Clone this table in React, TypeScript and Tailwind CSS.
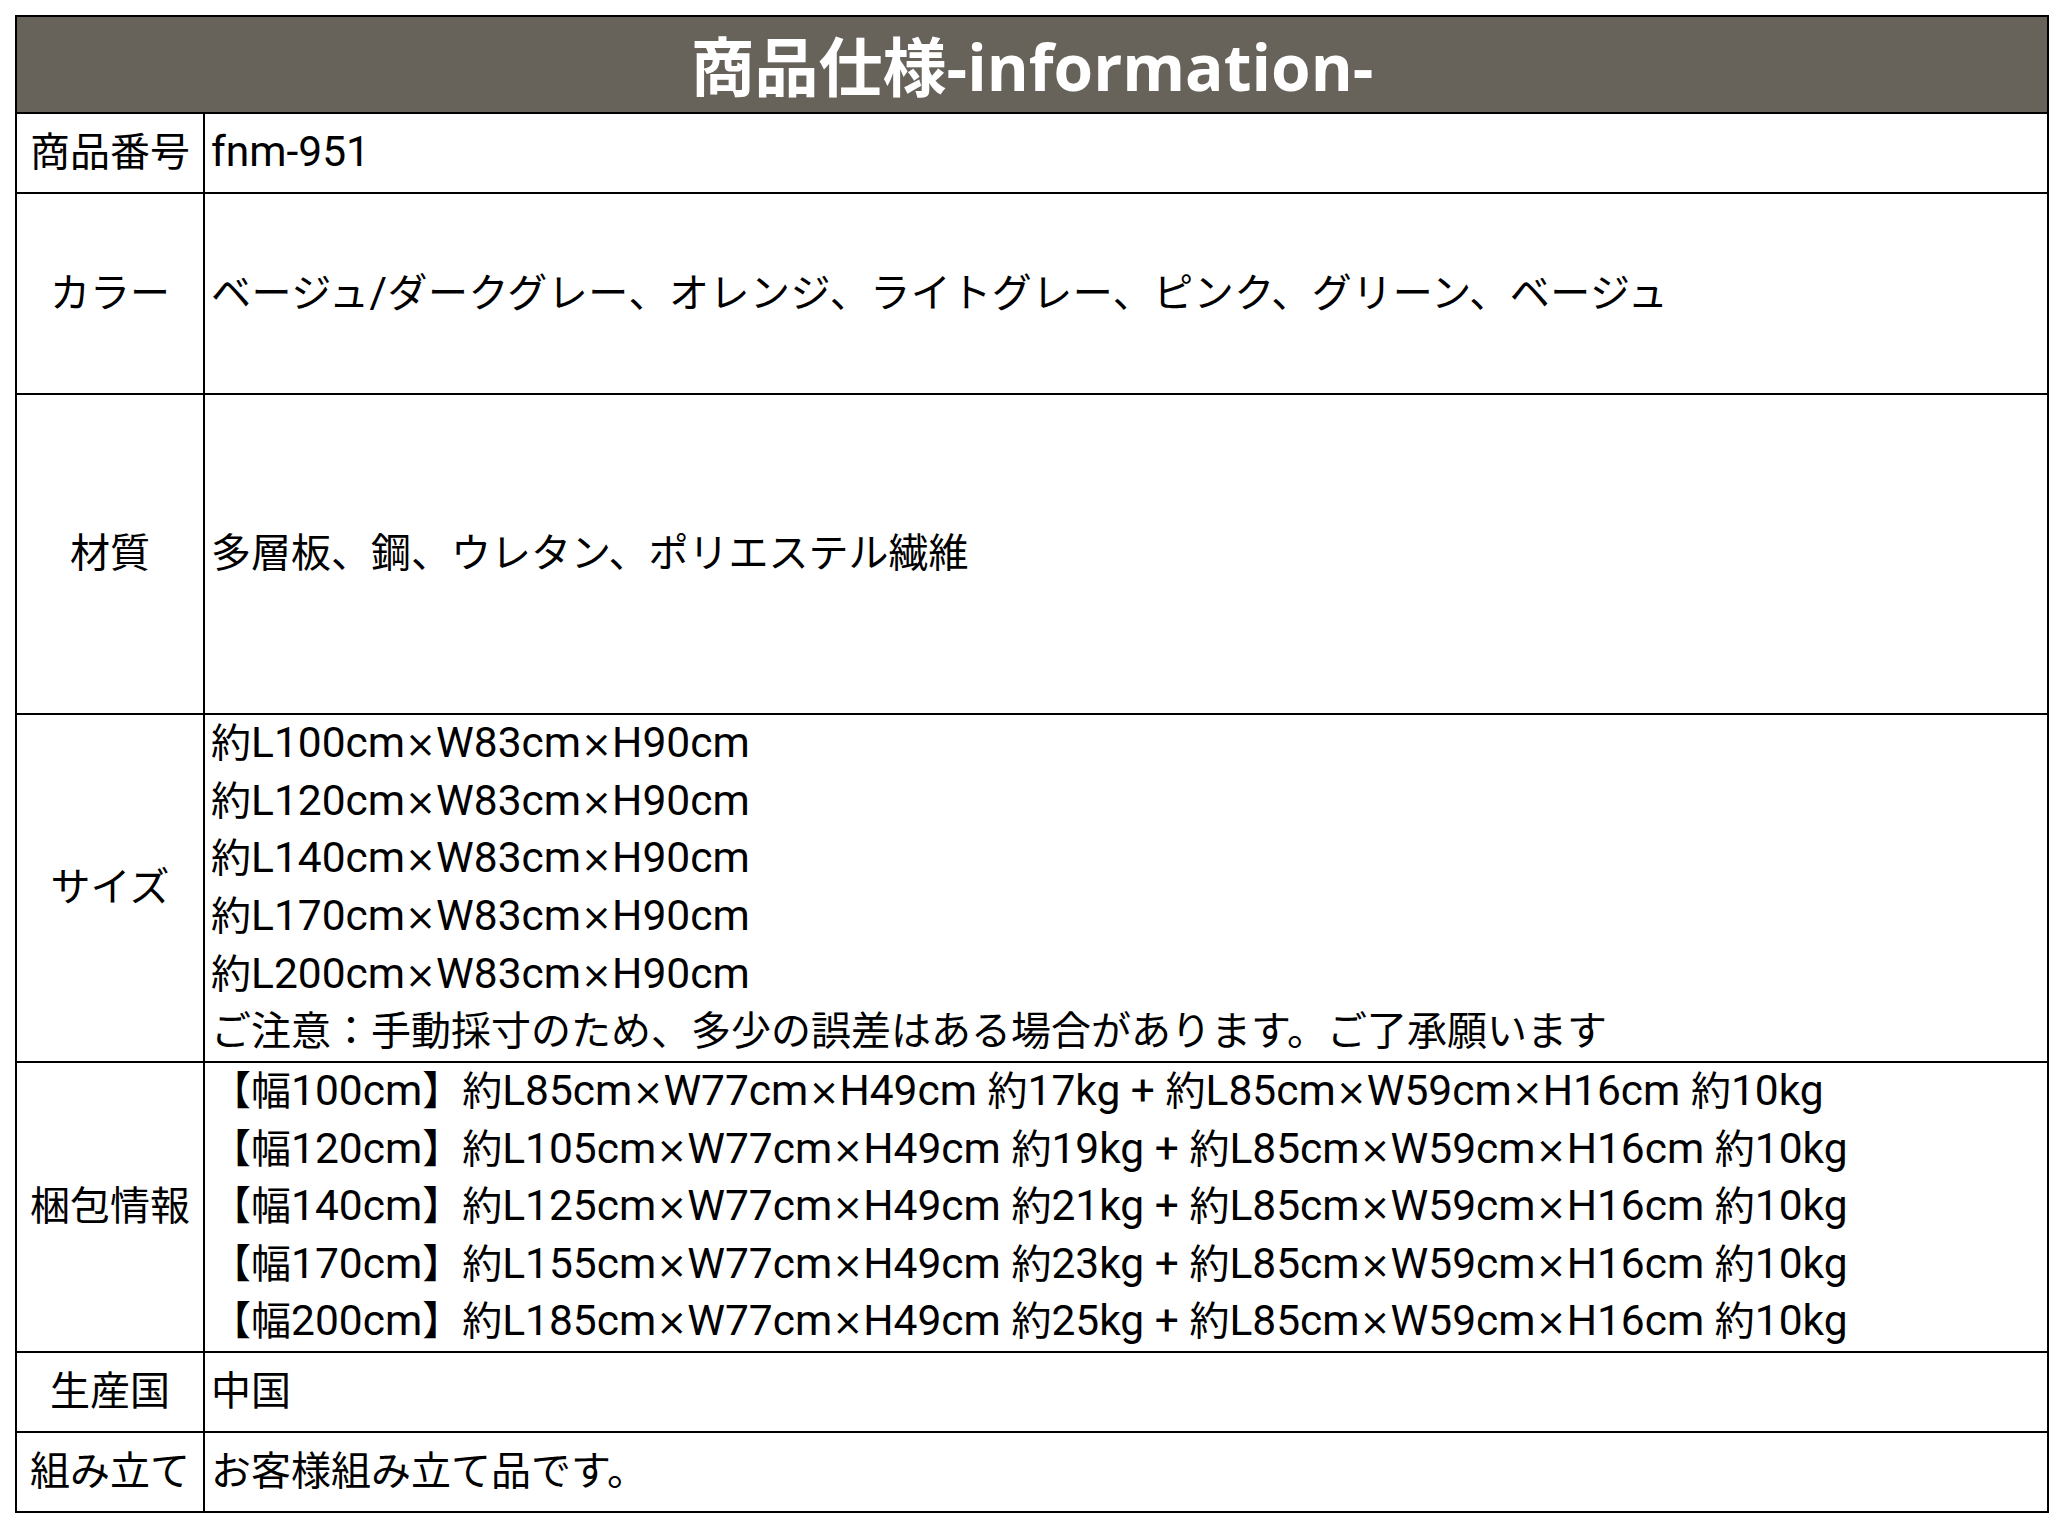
import React from "react";

const CJK = /([\u3000-\u30ff\u3400-\u9fff\uff00-\uffef]+)/;
const CJK_TEST = /[\u3000-\u30ff\u3400-\u9fff\uff00-\uffef]/;

function Latin({ text }: { text: string }) {
  const parts = text.split(/(×)/).filter((p) => p !== "");
  return (
    <>
      {parts.map((p, i) =>
        p === "×" ? (
          <span key={i} className="font-['DejaVu_Sans',sans-serif] text-[37px] leading-none">
            ×
          </span>
        ) : (
          <span key={i} className="text-[42.5px] leading-none">
            {p}
          </span>
        )
      )}
    </>
  );
}

function Mixed({ text }: { text: string }) {
  const parts = text.split(CJK).filter((p) => p !== "");
  return (
    <>
      {parts.map((p, i) =>
        CJK_TEST.test(p) ? <span key={i}>{p}</span> : <Latin key={i} text={p} />
      )}
    </>
  );
}

type Row = { label: string; h: string; lines: string[]; track?: boolean };

const rows: Row[] = [
  { label: "商品番号", h: "h-[80px]", lines: ["fnm-951"] },
  {
    label: "カラー",
    h: "h-[201px]",
    lines: ["ベージュ/ダークグレー、オレンジ、ライトグレー、ピンク、グリーン、ベージュ"],
    track: true,
  },
  { label: "材質", h: "h-[320px]", lines: ["多層板、鋼、ウレタン、ポリエステル繊維"] },
  {
    label: "サイズ",
    h: "h-[348px]",
    lines: [
      "約L100cm×W83cm×H90cm",
      "約L120cm×W83cm×H90cm",
      "約L140cm×W83cm×H90cm",
      "約L170cm×W83cm×H90cm",
      "約L200cm×W83cm×H90cm",
      "ご注意：手動採寸のため、多少の誤差はある場合があります。ご了承願います",
    ],
  },
  {
    label: "梱包情報",
    h: "h-[290px]",
    lines: [
      "【幅100cm】約L85cm×W77cm×H49cm 約17kg + 約L85cm×W59cm×H16cm 約10kg",
      "【幅120cm】約L105cm×W77cm×H49cm 約19kg + 約L85cm×W59cm×H16cm 約10kg",
      "【幅140cm】約L125cm×W77cm×H49cm 約21kg + 約L85cm×W59cm×H16cm 約10kg",
      "【幅170cm】約L155cm×W77cm×H49cm 約23kg + 約L85cm×W59cm×H16cm 約10kg",
      "【幅200cm】約L185cm×W77cm×H49cm 約25kg + 約L85cm×W59cm×H16cm 約10kg",
    ],
  },
  { label: "生産国", h: "h-[80px]", lines: ["中国"] },
  { label: "組み立て", h: "h-[78px]", lines: ["お客様組み立て品です。"] },
];

export default function App() {
  return (
    <div className="w-[2064px] h-[1528px] bg-white pt-[15px] pl-[15px] font-['Roboto','Noto_Sans_CJK_JP',sans-serif] text-black">
      <div className="w-[2034px] border-2 border-black flex flex-col">
        <div className="h-[97px] bg-[#67635a] border-b-2 border-black flex items-center justify-center pt-[4px]">
          <span className="font-['Open_Sans','Noto_Sans_CJK_JP',sans-serif] font-bold text-[64px] leading-none text-white whitespace-nowrap">
            商品仕様-information-
          </span>
        </div>
        {rows.map((r, i) => (
          <div
            key={r.label}
            className={`flex ${r.h} ${i < rows.length - 1 ? "border-b-2 border-black" : ""}`}
          >
            <div className="w-[188px] shrink-0 border-r-2 border-black flex items-center justify-center text-[40px] leading-[57.6px] whitespace-nowrap">
              {r.label}
            </div>
            <div
              className={`flex-1 flex flex-col justify-center pl-[6px] text-[40px] leading-[57.6px] ${
                r.track ? "tracking-[0.5px]" : ""
              }`}
            >
              {r.lines.map((l, j) => (
                <div key={j} className="whitespace-nowrap h-[57.6px]">
                  <Mixed text={l} />
                </div>
              ))}
            </div>
          </div>
        ))}
      </div>
    </div>
  );
}
